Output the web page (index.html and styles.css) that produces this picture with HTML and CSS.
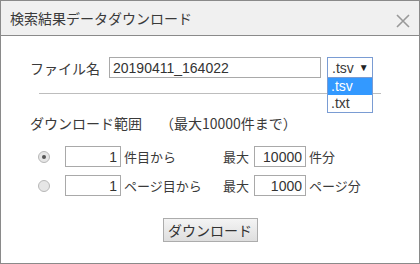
FILE: index.html
```html
<!DOCTYPE html>
<html lang="ja">

<head>
    <meta charset="UTF-8">
    <title>検索結果データダウンロード</title>
    <link rel="stylesheet" href="styles.css">
</head>

<body>
    <div class="dialog">
        <div class="dialog-header">
            <span class="dialog-title">検索結果データダウンロード</span>
            <span class="close-btn">
                <svg width="14" height="14" viewBox="0 0 14 14">
                    <path d="M1 1 L13 13 M13 1 L1 13" stroke="#999" stroke-width="1.6" fill="none" />
                </svg>
            </span>
        </div>
        <div class="dialog-body">
            <div class="file-row">
                <span class="label">ファイル名</span>
                <input class="text-input file-name" type="text" value="20190411_164022">
                <div class="select-wrap">
                    <div class="select-box">.tsv <span class="arrow">▼</span></div>
                    <div class="select-list">
                        <div class="option selected">.tsv</div>
                        <div class="option">.txt</div>
                    </div>
                </div>
            </div>
            <hr class="divider">
            <div class="range-title">
                <span>ダウンロード範囲</span>
                <span class="range-note">（最大10000件まで）</span>
            </div>
            <div class="range-row">
                <span class="radio checked"></span>
                <input class="text-input num" type="text" value="1">
                <span class="unit">件目から</span>
                <span class="max">最大</span>
                <input class="text-input num-max" type="text" value="10000">
                <span class="unit">件分</span>
            </div>
            <div class="range-row">
                <span class="radio"></span>
                <input class="text-input num" type="text" value="1">
                <span class="unit">ページ目から</span>
                <span class="max">最大</span>
                <input class="text-input num-max" type="text" value="1000">
                <span class="unit">ページ分</span>
            </div>
            <div class="actions">
                <button class="btn">ダウンロード</button>
            </div>
        </div>
    </div>
</body>

</html>
```

FILE: styles.css
```css
* {
    box-sizing: border-box;
}

body {
    margin: 0;
    font-family: "Noto Sans CJK JP", "Liberation Sans", sans-serif;
    font-size: 13px;
    color: #3a3a3a;
    background: #fff;
}

.dialog {
    width: 420px;
    height: 264px;
    border: 1px solid #8a8a8a;
    display: flex;
    flex-direction: column;
}

.dialog-header {
    height: 35px;
    background-color: #f0f0f0;
    border-bottom: 1px solid #8a8a8a;
    display: flex;
    align-items: center;
    justify-content: space-between;
    padding: 0 9px 0 9px;
}

.dialog-title {
    font-size: 14px;
}

.close-btn {
    display: flex;
    margin-top: 5px;
}

.dialog-body {
    flex: 1;
    padding: 0 0 0 29px;
}

.file-row {
    display: flex;
    align-items: center;
    height: 21px;
    margin-top: 21px;
}

.label {
    font-size: 14px;
    width: 79px;
}

.text-input {
    font-family: "Liberation Sans", sans-serif;
    font-size: 14px;
    color: #333;
    border: 1px solid #a9a9a9;
    height: 21px;
    padding: 0 3px;
    margin: 0;
}

.file-name {
    width: 212px;
}

.select-wrap {
    position: relative;
    margin-left: 6px;
}

.select-box {
    width: 46px;
    height: 21px;
    border: 1px solid #7a9cd3;
    font-family: "Liberation Sans", sans-serif;
    font-size: 14px;
    padding: 0 0 0 4px;
    display: flex;
    align-items: center;
    gap: 5px;
}

.arrow {
    font-size: 10px;
    color: #222;
}

.select-list {
    position: absolute;
    top: 21px;
    left: 0;
    width: 46px;
    border: 1px solid #7a9cd3;
    border-top: none;
    background: #fff;
    font-family: "Liberation Sans", sans-serif;
    font-size: 14px;
}

.option {
    height: 17px;
    line-height: 17px;
    padding-left: 3px;
}

.option.selected {
    background-color: #3399ff;
    color: #fff;
}

.divider {
    border: none;
    border-top: 1px solid #bdbdbd;
    margin: 15px 0 0 9px;
    width: 342px;
}

.range-title {
    font-size: 14px;
    margin-top: 19px;
    display: flex;
    gap: 18px;
}

.range-row {
    display: flex;
    align-items: center;
    height: 21px;
    margin-top: 8px;
    font-size: 13px;
}

.range-title + .range-row {
    margin-top: 13px;
}

.radio {
    width: 12px;
    height: 12px;
    border-radius: 50%;
    border: 1px solid #b8b8b8;
    background: #e6e6e6;
    margin-left: 8px;
    margin-right: 15px;
    position: relative;
}

.radio.checked::after {
    content: "";
    position: absolute;
    left: 3px;
    top: 3px;
    width: 4px;
    height: 4px;
    border-radius: 50%;
    background: #555;
}

.num {
    width: 56px;
    text-align: right;
}

.unit {
    margin-left: 3px;
}

.range-row .unit:nth-of-type(2) {
    width: 101px;
}

.max {
    margin-left: -2px;
    margin-right: 5px;
}

.num-max {
    width: 52px;
    text-align: right;
}

.actions {
    display: flex;
    justify-content: center;
    margin-top: 22px;
    padding-right: 29px;
}

.btn {
    font-family: "Noto Sans CJK JP", sans-serif;
    font-size: 14px;
    color: #333;
    background: linear-gradient(#f4f4f4, #dedede);
    border: 1px solid #acacac;
    height: 24px;
    width: 95px;
    padding: 0;
}
```
